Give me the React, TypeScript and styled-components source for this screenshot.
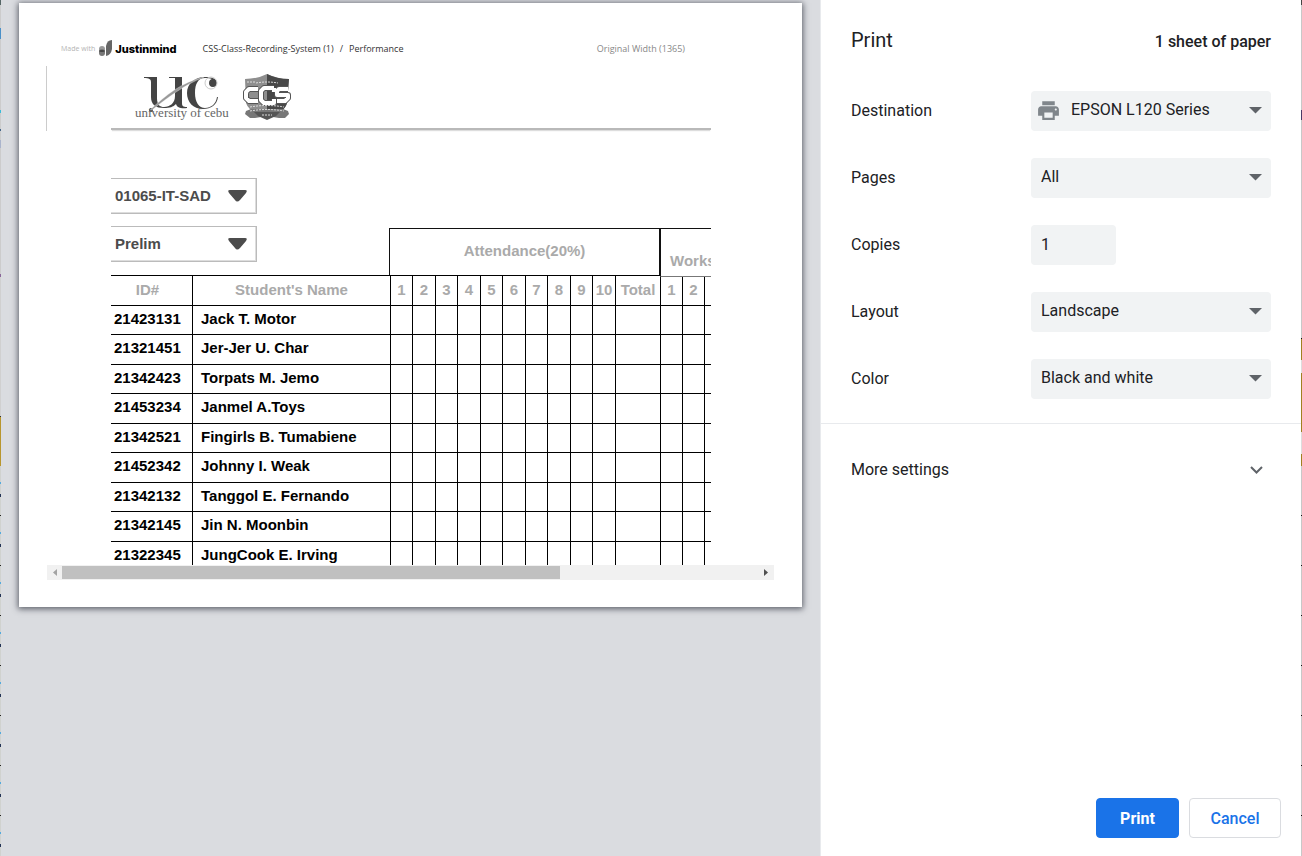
import React from "react";
import styled, { createGlobalStyle, css } from "styled-components";

const GlobalStyle = createGlobalStyle`
  *, *::before, *::after { box-sizing: border-box; }
  body { margin: 0; background: #fff; font-family: Roboto, "Liberation Sans", sans-serif; }
  button, input, select { font-family: inherit; }
`;

const Dialog = styled.div`
  display: flex;
  min-height: 100vh;
`;

/* Strip of the page behind the dialog that stays visible at each side */
const Backdrop = styled.div<{ $side: "left" | "right" }>`
  flex: none;
  width: 1px;
  background: ${(p) =>
    p.$side === "left"
      ? `linear-gradient(#566 0 5px, #ccc 5px 28px, #4a90c8 28px 39px, #ccc 39px 110px, #3bbcd8 110px 113px,
          #ccc 113px 129px, #468 129px 131px, #ccc 131px 140px, #aab4cc 140px 148px, #ccc 148px 274px,
          #869 274px 277px, #d0d0d0 277px 416px, #333 416px 417px, #b8962e 417px 466px, transparent 466px),
         repeating-linear-gradient(#d0d2cf 0 15px, #222 15px 16px, #d0d2cf 16px 32px, #5ad 32px 34px,
          #d0d2cf 34px 44px, #235 44px 47px, #d0d2cf 47px 50px)`
      : `linear-gradient(#444 0 5px, #c8c8c8 5px 110px, #4a3a66 110px 120px, #c8c8c8 120px 338px, #111 338px 339px,
          #a08020 339px 360px, #ddd 360px 373px, #a08020 373px 432px, #ddd 432px 454px, #a08020 454px 466px,
          transparent 466px),
         repeating-linear-gradient(#c8c8c8 0 15px, #111 15px 16px, #c8c8c8 16px 50px)`};
`;

/* ---------- Preview ---------- */

const Preview = styled.main`
  flex: 1;
  min-width: 0;
  padding: 3px 18px 20px;
  background: #dadce0;
`;

const Paper = styled.article`
  height: 604px;
  padding: 36px 28px 0;
  background: #fff;
  box-shadow: 0 1px 6px 1px rgba(50, 54, 64, 0.75);
  font-family: "Liberation Sans", Arial, sans-serif;
`;

const TopBar = styled.header`
  display: flex;
  align-items: center;
  height: 20px;
  margin-bottom: 7px;
  padding: 0 89px 0 14px;
  font-family: "Open Sans", sans-serif;
  font-size: 9px;
  line-height: 12px;
  white-space: nowrap;
  color: #333;
`;

const MadeWith = styled.span`
  font-size: 7px;
  color: #b4b4b4;
`;

const Brand = styled.strong`
  margin-right: 26px;
  font-family: Inter, sans-serif;
  font-size: 11px;
  font-weight: 800;
  color: #000;
`;

const BrandMark = styled.svg`
  width: 15px;
  height: 18px;
  margin: 0 2px 3px 3px;
`;

const Slash = styled.span`
  margin: 0 6px;
`;

const OriginalWidth = styled.span`
  margin-left: auto;
  color: #888;
`;

const SchoolHeader = styled.div`
  position: relative;
  display: flex;
  align-items: flex-start;
  gap: 12px;
  height: 64px;
  margin: 0 63px 0 64px;
  padding: 8px 0 0 24px;
  border-bottom: 2px solid #b9b9b9;
  box-shadow: 0 2px 1px -1px #ddd;

  &::before {
    content: "";
    position: absolute;
    top: 0;
    left: -65px;
    width: 1px;
    height: 65px;
    background: #ccc;
  }
`;

const Frame = styled.section`
  height: 387px;
  margin: 48px 63px 0 64px;
  overflow: hidden;
`;

const FilterRow = styled.div`
  display: flex;
  align-items: flex-end;
  height: 97px;
`;

const Filters = styled.div`
  display: flex;
  flex: none;
  flex-direction: column;
  align-self: flex-start;
  gap: 12px;
  width: 278px;
`;

const FilterBox = styled.label`
  position: relative;
  display: block;
  width: 146px;
`;

const FilterSelect = styled.select`
  appearance: none;
  display: block;
  width: 100%;
  height: 36px;
  padding: 0 4px 2px;
  border: 1px solid #bbb;
  border-left: 0;
  border-radius: 0;
  background: #fff;
  box-shadow: inset -1px -1px #ddd;
  color: #4c4c4c;
  font-size: 15px;
  font-weight: 700;
`;

const FilterArrow = styled.svg`
  position: absolute;
  right: 10px;
  top: 12px;
  width: 19px;
  height: 12px;
  pointer-events: none;
`;

const GroupHeading = styled.div`
  flex: none;
  width: 271px;
  height: 47px;
  padding-top: 13px;
  border: 1px solid #111;
  border-bottom: 0;
  color: #aaa;
  font-size: 15px;
  font-weight: 700;
  line-height: 18px;
  text-align: center;
`;

const WorksHeading = styled(GroupHeading)`
  position: relative;
  width: 136px;
  height: 49px;
  margin-bottom: -2px;
  padding: 23px 0 0 9px;
  border-bottom: 1px solid #777;
  background: #fff;
  text-align: left;
`;

const ScoreTable = styled.table`
  table-layout: fixed;
  width: 660px;
  border-collapse: separate;
  border-spacing: 0;
  border-top: 1px solid #000;

  th, td {
    height: 29px;
    padding: 0;
    border-right: 1px solid #000;
    border-bottom: 1px solid #000;
    font-size: 15px;
    line-height: 18px;
    font-weight: 700;
    white-space: nowrap;
  }
  tbody tr:nth-child(even) td { height: 30px; }
  tbody td { padding-bottom: 3px; }
  thead th { height: 30px; padding-bottom: 1px; color: #aaa; }
  thead th:first-child { padding-right: 8px; }
`;

const IdCell = styled.td`
  && { padding-left: 3px; }
`;

const NameCell = styled.td`
  && { padding-left: 8px; }
`;

const ScrollTrack = styled.div`
  display: flex;
  align-items: center;
  justify-content: space-between;
  height: 15px;
  padding-right: 5px;
  background: #f1f1f1;
`;

const ScrollThumb = styled.div`
  flex: 0 0 69%;
  height: 13px;
  margin-right: auto;
  background: #c0c0c0;
`;

const ScrollArrow = styled.svg`
  flex: none;
  width: 5px;
  height: 7px;
  margin: 0 5px;
  &:last-child { margin: 0; }
`;

/* ---------- Settings ---------- */

const Sidebar = styled.aside`
  flex: none;
  display: flex;
  flex-direction: column;
  width: 481px;
  border-left: 1px solid #e8eaed;
  background: #fff;
  color: #202124;
  font-size: 16px;
  line-height: 20px;
`;

const Heading = styled.header`
  display: flex;
  align-items: baseline;
  justify-content: space-between;
  padding: 28px 30px 24px;
`;

const Title = styled.h1`
  margin: 0;
  font-size: 20px;
  line-height: 24px;
  font-weight: 400;
`;

const SheetCount = styled.span`
  font-weight: 500;
`;

const Settings = styled.div`
  display: grid;
  gap: 27px;
  padding: 15px 30px 24px;
  border-bottom: 1px solid #e8eaed;
`;

const SettingRow = styled.div`
  display: flex;
  align-items: center;
  justify-content: space-between;
`;

const Field = styled.div`
  position: relative;
  width: 240px;
`;

const control = css`
  display: block;
  height: 40px;
  border: 0;
  border-radius: 4px;
  background: #f1f3f4;
  color: #202124;
  font-size: 16px;
`;

const Select = styled.select<{ $icon?: boolean }>`
  ${control}
  appearance: none;
  width: 100%;
  padding: 0 32px 3px ${(p) => (p.$icon ? 40 : 10)}px;
`;

const CopiesInput = styled.input`
  ${control}
  width: 85px;
  padding: 0 10px 1px;
`;

const Caret = styled.svg`
  position: absolute;
  top: 16px;
  right: 9px;
  width: 13px;
  height: 7px;
  pointer-events: none;
`;

const PrinterIcon = styled.svg`
  position: absolute;
  top: 7px;
  left: 5px;
  width: 25px;
  height: 25px;
  pointer-events: none;
`;

const MoreSettings = styled.button`
  display: flex;
  align-items: center;
  justify-content: space-between;
  padding: 36px 38px 36px 30px;
  border: 0;
  background: none;
  color: inherit;
  font-size: 16px;
  line-height: 20px;
`;

const Actions = styled.footer`
  display: flex;
  justify-content: flex-end;
  gap: 10px;
  margin-top: auto;
  padding: 18px 20px;
`;

const ActionButton = styled.button<{ $primary?: boolean }>`
  width: ${(p) => (p.$primary ? 83 : 92)}px;
  height: 40px;
  padding: 0;
  border: 1px solid ${(p) => (p.$primary ? "#1a73e8" : "#dadce0")};
  border-radius: 4px;
  background: ${(p) => (p.$primary ? "#1a73e8" : "#fff")};
  color: ${(p) => (p.$primary ? "#fff" : "#1a73e8")};
  font-size: 16px;
  font-weight: ${(p) => (p.$primary ? 700 : 500)};
`;

/* ---------- Data ---------- */

const students = [
  ["21423131", "Jack T. Motor"],
  ["21321451", "Jer-Jer U. Char"],
  ["21342423", "Torpats M. Jemo"],
  ["21453234", "Janmel A.Toys"],
  ["21342521", "Fingirls B. Tumabiene"],
  ["21452342", "Johnny I. Weak"],
  ["21342132", "Tanggol E. Fernando"],
  ["21342145", "Jin N. Moonbin"],
  ["21322345", "JungCook E. Irving"],
];

const scores = ["1", "2", "3", "4", "5", "6", "7", "8", "9", "10", "Total", "1", "2", ""];
const columnWidths = [82, 198, 22, 23, 22, 23, 22, 23, 22, 23, 22, 23, 45, 22, 22, 66];

const fields = [
  { id: "pages", label: "Pages", value: "All" },
  { id: "copies", label: "Copies", value: "1" },
  { id: "layout", label: "Layout", value: "Landscape" },
  { id: "color", label: "Color", value: "Black and white" },
];

/* ---------- Drawings ---------- */

const UniversityLogo = () => (
  <svg width="95" height="50" viewBox="0 0 95 50" role="img" aria-label="University of Cebu">
    <g fill="#444">
      <path d="M9 3h13v21c0 7 3 9 7 9 6 0 11-4 11-11V4h-6V3h13v26c0 3 1 4 5 4v1c-5 1-10 0-11-4-3 3-6 4-12 4-8 0-13-3-13-11V8c0-3-2-4-7-4z" />
      <path d="M83 23c-1 8-7 12-15 12-10 0-16-7-16-16S59 3 70 3c7 0 12 2 12 6 0 2-2 4-4 4-3 0-4-2-4-4 0-3 2-4 3-4-2-1-4-1-7-1-7 0-10 6-10 15s4 15 10 15c6 0 11-4 12-11z" />
      <circle cx="16" cy="36" r="2" />
    </g>
    <path d="M15 36C31 21 47 8 69 3C49 11 32 24 17 36z" fill="#999" stroke="#fff" strokeWidth=".3" />
    <circle cx="76" cy="9" r="6" fill="none" stroke="#ccc" />
    <text x="0" y="43" fontFamily="Liberation Serif" fontSize="13" fill="#666">
      university of cebu
    </text>
  </svg>
);

const ccsLetters = "M16 15H7l-3 3v6l3 3h9M32 14H22l-3 3v9l3 3h10v-4M32 14v4M46 15H37l-2 2v4h11v3l-3 3h-8";

const CcsLogo = () => (
  <svg width="50" height="48" viewBox="0 0 50 48" role="img" aria-label="CCS">
    <path d="M3 5Q15 5 25 0Q35 5 47 5L45 29Q43 38 25 45Q7 38 4 29z" fill="#8e8e8e" />
    <path d="M25 0Q35 5 47 5L45 29Q43 38 25 45z" fill="#484848" />
    <path d="M4 37l5-2h32l5 2 1 3-4 4h-6l-12-2-12 2H8l-5-4z" fill="#777" />
    <path d="M12 38h26l-4 4-9 4-9-4z" fill="#555" />
    <g fill="none" strokeLinejoin="round">
      <path d={ccsLetters} stroke="#555" strokeWidth="6" />
      <path d={ccsLetters} stroke="#fff" strokeWidth="4" />
    </g>
    <path
      d="M8 33Q25 30 42 33M8 37Q25 34 42 37M14 9Q25 7 36 9M5 8h8M20 41h10"
      stroke="#ddd"
      strokeDasharray="2 1"
      fill="none"
    />
  </svg>
);

const DropCaret = () => (
  <Caret viewBox="0 0 13 7" aria-hidden="true">
    <path d="M0 0h13L6.500 6.500z" fill="#5f6368" />
  </Caret>
);

const Filter = ({ label, value }: { label: string; value: string }) => (
  <FilterBox>
    <FilterSelect aria-label={label}>
      <option>{value}</option>
    </FilterSelect>
    <FilterArrow viewBox="0 0 19 12" aria-hidden="true">
      <path d="M2 0h15q3 0 1 3l-6 7q-3 3-5 0L1 3Q-1 0 2 0z" fill="#4c4c4c" />
    </FilterArrow>
  </FilterBox>
);

export default function App() {
  return (
    <Dialog>
      <GlobalStyle />
      <Backdrop $side="left" />
      <Preview>
        <Paper>
          <TopBar>
            <MadeWith>Made with</MadeWith>
            <BrandMark viewBox="0 0 15 18" aria-hidden="true">
              <path d="M8 17V7Q9 1 14 1v9q-1 6-6 7z" fill="#666" />
              <rect x="1" y="7" width="6" height="6" rx="3" fill="#999" />
              <rect x="1" y="10" width="6" height="7" rx="3" fill="#777" />
              <ellipse cx="4" cy="12" rx="3" ry="1" fill="#444" />
            </BrandMark>
            <Brand>Justinmind</Brand>
            <span>CSS-Class-Recording-System (1)</span>
            <Slash>/</Slash>
            <span>Performance</span>
            <OriginalWidth>Original Width (1365)</OriginalWidth>
          </TopBar>
          <SchoolHeader>
            <UniversityLogo />
            <CcsLogo />
          </SchoolHeader>
          <Frame>
            <FilterRow>
              <Filters>
                <Filter label="Class" value="01065-IT-SAD" />
                <Filter label="Term" value="Prelim" />
              </Filters>
              <GroupHeading>Attendance(20%)</GroupHeading>
              <WorksHeading>Works</WorksHeading>
            </FilterRow>
            <ScoreTable>
              <colgroup>
                {columnWidths.map((w, i) => (
                  <col key={i} width={w} />
                ))}
              </colgroup>
              <thead>
                <tr>
                  <th scope="col">ID#</th>
                  <th scope="col">Student's Name</th>
                  {scores.map((s, i) => (
                    <th scope="col" key={i}>{s}</th>
                  ))}
                </tr>
              </thead>
              <tbody>
                {students.map(([id, name]) => (
                  <tr key={id}>
                    <IdCell>{id}</IdCell>
                    <NameCell>{name}</NameCell>
                    {scores.map((_, i) => (
                      <td key={i} />
                    ))}
                  </tr>
                ))}
              </tbody>
            </ScoreTable>
          </Frame>
          <ScrollTrack>
            <ScrollArrow viewBox="0 0 5 7" aria-hidden="true">
              <path d="M5 0v7L1 3.500z" fill="#a3a3a3" />
            </ScrollArrow>
            <ScrollThumb />
            <ScrollArrow viewBox="0 0 5 7" aria-hidden="true">
              <path d="M0 0v7l4-3.500z" fill="#505050" />
            </ScrollArrow>
          </ScrollTrack>
        </Paper>
      </Preview>
      <Sidebar>
        <Heading>
          <Title>Print</Title>
          <SheetCount>1 sheet of paper</SheetCount>
        </Heading>
        <Settings>
          <SettingRow>
            <label htmlFor="destination">Destination</label>
            <Field>
              <Select id="destination" $icon>
                <option>EPSON L120 Series</option>
              </Select>
              <PrinterIcon viewBox="0 0 24 24" aria-hidden="true">
                <path
                  fill="#80868b"
                  d="M19 8H5c-1.660 0-3 1.340-3 3v6h4v4h12v-4h4v-6c0-1.660-1.340-3-3-3zm-3 11H8v-5h8v5zm3-7c-.550 0-1-.450-1-1s.450-1 1-1 1 .450 1 1-.450 1-1 1zm-1-9H6v4h12V3z"
                />
              </PrinterIcon>
              <DropCaret />
            </Field>
          </SettingRow>
          {fields.map((d) => (
            <SettingRow key={d.id}>
              <label htmlFor={d.id}>{d.label}</label>
              <Field>
                {d.id === "copies" ? (
                  <CopiesInput id={d.id} defaultValue={d.value} />
                ) : (
                  <>
                    <Select id={d.id}>
                      <option>{d.value}</option>
                    </Select>
                    <DropCaret />
                  </>
                )}
              </Field>
            </SettingRow>
          ))}
        </Settings>
        <MoreSettings type="button">
          More settings
          <svg width="13" height="8" viewBox="0 0 13 8" aria-hidden="true">
            <path d="M1 1l5.500 5.500L12 1" fill="none" stroke="#5f6368" strokeWidth="2" />
          </svg>
        </MoreSettings>
        <Actions>
          <ActionButton type="button" $primary>Print</ActionButton>
          <ActionButton type="button">Cancel</ActionButton>
        </Actions>
      </Sidebar>
      <Backdrop $side="right" />
    </Dialog>
  );
}
